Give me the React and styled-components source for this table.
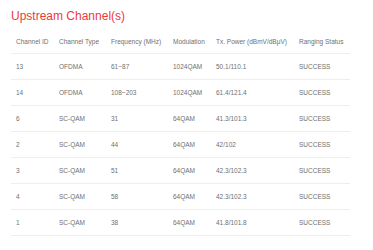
import styled, { createGlobalStyle } from "styled-components";

const GlobalStyle = createGlobalStyle`
  html, body {
    margin: 0;
    padding: 0;
    background: #fff;
  }
  body {
    font-family: "Liberation Sans", Arial, sans-serif;
  }
`;

const rows = [
  { id: "13", type: "OFDMA", freq: "61~87", mod: "1024QAM", power: "50.1/110.1", status: "SUCCESS" },
  { id: "14", type: "OFDMA", freq: "108~203", mod: "1024QAM", power: "61.4/121.4", status: "SUCCESS" },
  { id: "6", type: "SC-QAM", freq: "31", mod: "64QAM", power: "41.3/101.3", status: "SUCCESS" },
  { id: "2", type: "SC-QAM", freq: "44", mod: "64QAM", power: "42/102", status: "SUCCESS" },
  { id: "3", type: "SC-QAM", freq: "51", mod: "64QAM", power: "42.3/102.3", status: "SUCCESS" },
  { id: "4", type: "SC-QAM", freq: "58", mod: "64QAM", power: "42.3/102.3", status: "SUCCESS" },
  { id: "1", type: "SC-QAM", freq: "38", mod: "64QAM", power: "41.8/101.8", status: "SUCCESS" },
];

// column widths measured from the screenshot
const widths = [43, 52, 62, 43, 83, 56];

const Page = styled.div`
  padding: 9px 0 0 11px;
`;

const Title = styled.h2`
  margin: 0;
  font-size: 12px;
  line-height: 14px;
  font-weight: normal;
  color: #ec3a3a;
`;

const Table = styled.table`
  margin-top: 7px;
  width: 339px;
  border-collapse: collapse;
  table-layout: fixed;
  font-size: 6.5px;
  color: #707070;
`;

const Th = styled.th`
  height: 23px;
  padding: 0 0 0 5px;
  text-align: left;
  font-weight: normal;
  vertical-align: middle;
  white-space: nowrap;
  border-bottom: 1px solid #eee;
`;

const Td = styled.td`
  height: 25px;
  padding: 0 0 0 5px;
  text-align: left;
  vertical-align: middle;
  white-space: nowrap;
  border-bottom: 1px solid #eee;
`;

export default function App() {
  return (
    <>
      <GlobalStyle />
      <Page>
        <Title>Upstream Channel(s)</Title>
        <Table>
          <colgroup>
            {widths.map((w, i) => (
              <col key={i} style={{ width: w }} />
            ))}
          </colgroup>
          <thead>
            <tr>
              <Th>Channel ID</Th>
              <Th>Channel Type</Th>
              <Th>Frequency (MHz)</Th>
              <Th>Modulation</Th>
              <Th>Tx. Power (dBmV/dBμV)</Th>
              <Th>Ranging Status</Th>
            </tr>
          </thead>
          <tbody>
            {rows.map((r) => (
              <tr key={r.id}>
                <Td>{r.id}</Td>
                <Td>{r.type}</Td>
                <Td>{r.freq}</Td>
                <Td>{r.mod}</Td>
                <Td>{r.power}</Td>
                <Td>{r.status}</Td>
              </tr>
            ))}
          </tbody>
        </Table>
      </Page>
    </>
  );
}
